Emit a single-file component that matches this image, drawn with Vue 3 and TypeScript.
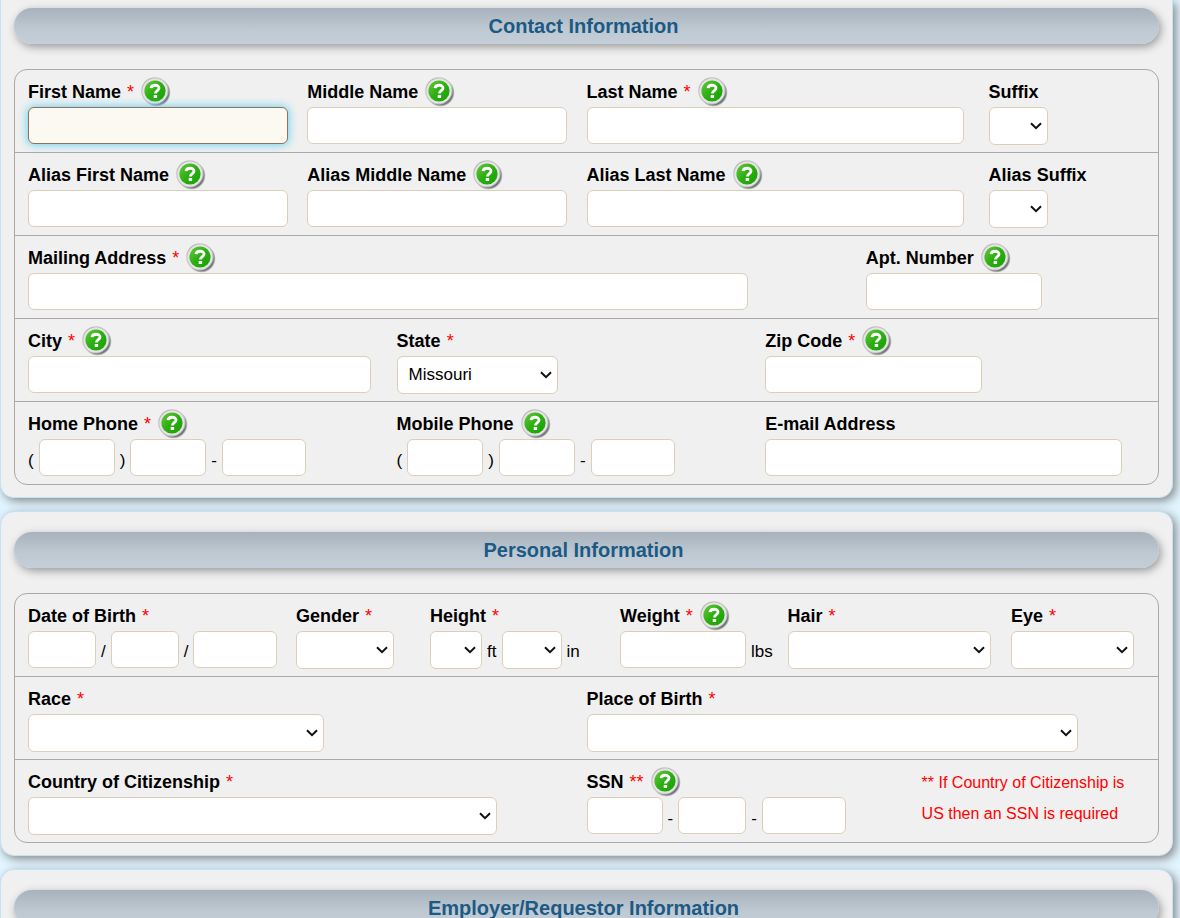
<script setup lang="ts">
import { reactive } from 'vue'

interface Part {
  kind: 'text' | 'select' | 'sep'
  id?: string
  width?: string
  name?: string
  sep?: string
  low?: boolean
  active?: boolean
  options?: string[]
}
interface Field {
  label: string
  mark?: string
  help?: boolean
  parts: Part[]
}
interface Row {
  layout: string
  fields: Field[]
  note?: string
}
interface Section {
  title: string
  rows: Row[]
}

const text = (id: string, width: string, name?: string): Part => ({ kind: 'text', id, width, name })
const select = (id: string, width: string, options: string[] = [''], name?: string): Part => ({
  kind: 'select', id, width, options, name,
})
const sep = (value: string, low = true): Part => ({ kind: 'sep', sep: value, low })

const phone = (id: string, label: string): Part[] => [
  sep('('), text(`${id}-area`, 'w-76', `${label} area code`),
  sep(')'), text(`${id}-prefix`, 'w-76', `${label} prefix`),
  sep('-'), text(`${id}-line`, 'w-84', `${label} line number`),
]

const suffixes = ['', 'Jr', 'Sr', 'II', 'III', 'IV']

const sections: Section[] = [
  {
    title: 'Contact Information',
    rows: [
      {
        layout: 'names',
        fields: [
          { label: 'First Name', mark: '*', help: true, parts: [{ ...text('first', 'w-name'), active: true }] },
          { label: 'Middle Name', help: true, parts: [text('middle', 'w-name')] },
          { label: 'Last Name', mark: '*', help: true, parts: [text('last', 'w-last')] },
          { label: 'Suffix', parts: [select('suffix', 'w-59', suffixes)] },
        ],
      },
      {
        layout: 'names',
        fields: [
          { label: 'Alias First Name', help: true, parts: [text('alias-first', 'w-name')] },
          { label: 'Alias Middle Name', help: true, parts: [text('alias-middle', 'w-name')] },
          { label: 'Alias Last Name', help: true, parts: [text('alias-last', 'w-last')] },
          { label: 'Alias Suffix', parts: [select('alias-suffix', 'w-59', suffixes)] },
        ],
      },
      {
        layout: 'address',
        fields: [
          { label: 'Mailing Address', mark: '*', help: true, parts: [text('mailing', 'w-mailing')] },
          { label: 'Apt. Number', help: true, parts: [text('apt', 'w-apt')] },
        ],
      },
      {
        layout: 'thirds',
        fields: [
          { label: 'City', mark: '*', help: true, parts: [text('city', 'w-name')] },
          { label: 'State', mark: '*', parts: [select('state', 'w-161', ['Missouri', 'Kansas', 'Illinois'])] },
          { label: 'Zip Code', mark: '*', help: true, parts: [text('zip', 'w-zip')] },
        ],
      },
      {
        layout: 'thirds',
        fields: [
          { label: 'Home Phone', mark: '*', help: true, parts: phone('home', 'Home phone') },
          { label: 'Mobile Phone', help: true, parts: phone('mobile', 'Mobile phone') },
          { label: 'E-mail Address', parts: [text('email', 'w-email')] },
        ],
      },
    ],
  },
  {
    title: 'Personal Information',
    rows: [
      {
        layout: 'traits',
        fields: [
          {
            label: 'Date of Birth', mark: '*',
            parts: [
              text('dob-month', 'w-68', 'Birth month'), sep('/', false),
              text('dob-day', 'w-68', 'Birth day'), sep('/', false),
              text('dob-year', 'w-84', 'Birth year'),
            ],
          },
          { label: 'Gender', mark: '*', parts: [select('gender', 'w-98', ['', 'Male', 'Female'])] },
          {
            label: 'Height', mark: '*',
            parts: [
              select('feet', 'w-52', ['', '4', '5', '6', '7'], 'Height, feet'), sep('ft', false),
              select('inches', 'w-60', ['', '1', '2', '3', '4', '5', '6', '7', '8', '9', '10', '11'], 'Height, inches'),
              sep('in', false),
            ],
          },
          { label: 'Weight', mark: '*', help: true, parts: [text('weight', 'w-126'), sep('lbs', false)] },
          { label: 'Hair', mark: '*', parts: [select('hair', 'w-hair')] },
          { label: 'Eye', mark: '*', parts: [select('eye', 'w-123')] },
        ],
      },
      {
        layout: 'halves',
        fields: [
          { label: 'Race', mark: '*', parts: [select('race', 'w-race')] },
          { label: 'Place of Birth', mark: '*', parts: [select('birthplace', 'w-place')] },
        ],
      },
      {
        layout: 'citizenship',
        note: '** If Country of Citizenship is US then an SSN is required',
        fields: [
          { label: 'Country of Citizenship', mark: '*', parts: [select('country', 'w-country')] },
          {
            label: 'SSN', mark: '**', help: true,
            parts: [
              text('ssn-area', 'w-76', 'SSN first three digits'), sep('-'),
              text('ssn-group', 'w-68', 'SSN middle two digits'), sep('-'),
              text('ssn-serial', 'w-84', 'SSN last four digits'),
            ],
          },
        ],
      },
    ],
  },
  { title: 'Employer/Requestor Information', rows: [] },
]

const values = reactive<Record<string, string>>({})
for (const section of sections)
  for (const row of section.rows)
    for (const field of row.fields)
      for (const part of field.parts)
        if (part.id) values[part.id] = part.options ? part.options[0] : ''

const target = (field: Field) => field.parts.find((part) => part.id)?.id
</script>

<template>
  <form class="page" @submit.prevent>
    <svg class="defs" aria-hidden="true">
      <defs>
        <linearGradient id="help-ring" x1="0" y1="0" x2="1" y2="1">
          <stop offset="0" stop-color="#a0a0a0" />
          <stop offset="0.25" stop-color="#c4c4c4" />
          <stop offset="0.55" stop-color="#c8c8c8" />
          <stop offset="0.8" stop-color="#a4a6a8" />
          <stop offset="1" stop-color="#4c5053" />
        </linearGradient>
        <linearGradient id="help-disc" x1="0" y1="0" x2="1" y2="1">
          <stop offset="0" stop-color="#68c83c" />
          <stop offset="0.5" stop-color="#2cae12" />
          <stop offset="1" stop-color="#16a000" />
        </linearGradient>
        <radialGradient id="help-shade">
          <stop offset="0.82" stop-color="#404448" stop-opacity="0.9" />
          <stop offset="1" stop-color="#404448" stop-opacity="0" />
        </radialGradient>
      </defs>
    </svg>

    <section v-for="section in sections" :key="section.title" class="panel">
      <h2 class="title">{{ section.title }}</h2>
      <div v-if="section.rows.length" class="box">
        <div v-for="(row, r) in section.rows" :key="r" class="row" :class="row.layout">
          <div v-for="field in row.fields" :key="field.label" class="field">
            <div class="caption">
              <label :for="target(field)">{{ field.label }}</label>
              <span v-if="field.mark" class="mark">{{ field.mark }}</span>
              <button v-if="field.help" type="button" class="help" :aria-label="`Help: ${field.label}`">
                <svg viewBox="0 0 30 30" width="30" height="30" aria-hidden="true">
                  <circle cx="15.5" cy="15.5" r="14.3" fill="url(#help-shade)" />
                  <circle cx="14" cy="14" r="13.8" fill="url(#help-ring)" />
                  <circle cx="14" cy="14" r="12.6" fill="#e4e4e4" />
                  <circle cx="14" cy="14" r="10.6" fill="url(#help-disc)" />
                  <path d="M10 11.2C10.4 7.4 18 7.2 18 11C18 13.6 14.4 13.6 14.4 16.6" fill="none" stroke="#fff" stroke-width="2.8" />
                  <rect x="12.7" y="18" width="3.4" height="3" rx="0.5" fill="#fff" />
                </svg>
              </button>
            </div>
            <div class="controls">
              <template v-for="(part, p) in field.parts" :key="p">
                <span v-if="part.kind === 'sep'" class="sep" :class="{ low: part.low }">{{ part.sep }}</span>
                <select
                  v-else-if="part.kind === 'select'"
                  :id="part.id"
                  v-model="values[part.id!]"
                  class="control choice"
                  :class="part.width"
                  :aria-label="part.name"
                >
                  <option v-for="option in part.options" :key="option" :value="option">{{ option }}</option>
                </select>
                <input
                  v-else
                  :id="part.id"
                  v-model="values[part.id!]"
                  type="text"
                  class="control"
                  :class="[part.width, { active: part.active }]"
                  :aria-label="part.name"
                />
              </template>
            </div>
          </div>
          <p v-if="row.note" class="note">{{ row.note }}</p>
        </div>
      </div>
    </section>
  </form>
</template>

<style>
body {
  background: #e0f5ff;
}
</style>

<style scoped>
.page {
  box-sizing: border-box;
  height: 100vh;
  overflow: hidden;
  padding-right: 7px;
  display: flex;
  flex-direction: column;
  gap: 13px;
  background: #e0f5ff;
  font-family: "Liberation Sans", Arial, sans-serif;
  font-size: 17px;
  color: #000;
}
.defs {
  position: absolute;
  width: 0;
  height: 0;
}
.panel {
  flex: none;
  padding: 20px 13px 12px;
  background: #f0f0f0;
  border: 1px solid #bfe3f7;
  border-radius: 14px;
  box-shadow: 3px 3px 10px #888;
}
.panel:first-of-type {
  padding-top: 8px;
  border-top: 0;
  border-top-left-radius: 0;
  border-top-right-radius: 0;
}
.title {
  margin: 0;
  height: 36px;
  padding-right: 6px;
  line-height: 36px;
  text-align: center;
  font-size: 20px;
  font-weight: bold;
  color: #1c5a85;
  background: linear-gradient(#a7b2bc, #bfc9d2 60%, #c4ced8);
  border-radius: 18px;
  box-shadow: 2px 3px 8px #999;
}
.box {
  margin-top: 25px;
  border: 1px solid #a9a9a9;
  border-radius: 13px;
}
.row {
  display: grid;
  padding: 0 13px 8px;
}
.row + .row {
  border-top: 1px solid #a9a9a9;
}
.names { grid-template-columns: 25% 25% 36% 14%; }
.address { grid-template-columns: 75% 25%; }
.thirds { grid-template-columns: 33% 33% 34%; }
.traits { grid-template-columns: 24% 12% 17% 15% 20% 12%; }
.halves { grid-template-columns: 50% 50%; }
.citizenship { grid-template-columns: 50% 30% 20%; }

.field {
  min-width: 0;
}
.caption {
  display: flex;
  align-items: center;
  height: 31px;
  padding-top: 6px;
  font-size: 18px;
  font-weight: bold;
  white-space: nowrap;
}
.caption label,
.mark {
  padding-top: 2px;
}
.mark {
  margin-left: 6px;
  font-weight: normal;
  color: #f00;
}
.help {
  display: block;
  flex: none;
  width: 30px;
  height: 30px;
  margin-left: 7px;
  padding: 0;
  border: 0;
  background: none;
  cursor: pointer;
}
.help svg {
  display: block;
}
.controls {
  display: flex;
  align-items: center;
  gap: 5px;
  height: 37px;
}
.sep {
  line-height: 20px;
  padding-top: 5px;
}
.sep.low {
  padding-top: 7px;
}
.control {
  box-sizing: border-box;
  flex: none;
  height: 37px;
  margin: 0;
  padding: 0 11px;
  font-family: inherit;
  font-size: 17px;
  color: #000;
  background-color: #fff;
  border: 1px solid #dccfba;
  border-radius: 6px;
  outline: none;
}
.control.active,
.control:focus {
  background-color: #fcf8f2;
  border-color: #8f7358;
  box-shadow: 0 0 9px 1px #6fd2f2;
}
.choice {
  appearance: none;
  height: 38px;
  padding-right: 20px;
  background-image: url("data:image/svg+xml,%3Csvg xmlns='http://www.w3.org/2000/svg' width='12' height='8' viewBox='0 0 12 8'%3E%3Cpath d='M1 1.2L6 6.2L11 1.2' fill='none' stroke='%23111' stroke-width='2'/%3E%3C/svg%3E");
  background-repeat: no-repeat;
  background-position: right 5px center;
}
.w-52 { width: 52px; }
.w-59 { width: 59px; }
.w-60 { width: 60px; }
.w-68 { width: 68px; }
.w-76 { width: 76px; }
.w-84 { width: 84px; }
.w-98 { width: 98px; }
.w-123 { width: 123px; }
.w-126 { width: 126px; }
.w-161 { width: 161px; }
.w-name { width: 93%; }
.w-last { width: 94%; }
.w-mailing { width: 86%; }
.w-apt { width: 63%; }
.w-zip { width: 57%; }
.w-email { width: 94%; }
.w-hair { width: 91%; }
.w-race { width: 53%; }
.w-place { width: 88%; }
.w-country { width: 84%; }

.note {
  margin: 0;
  padding-top: 7px;
  font-size: 16px;
  line-height: 31px;
  color: #f00;
}
</style>
